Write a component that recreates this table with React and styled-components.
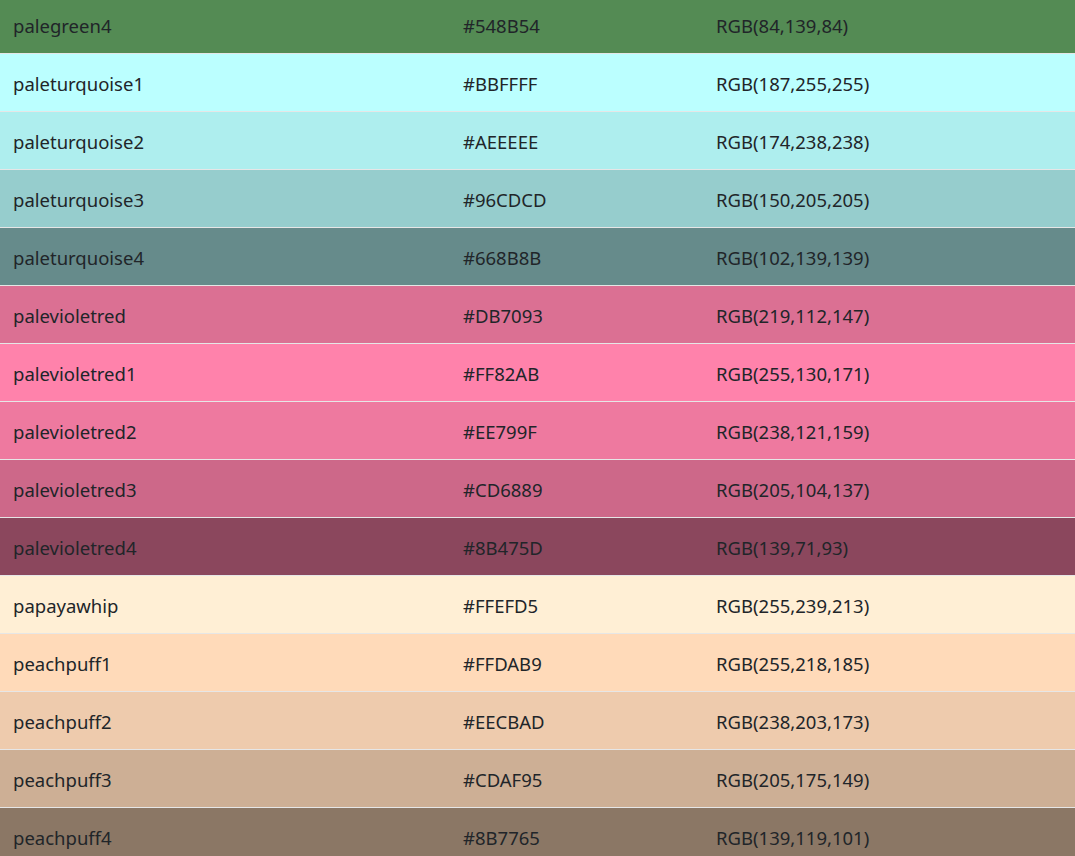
import styled, { createGlobalStyle } from "styled-components";

const GlobalStyle = createGlobalStyle`
  body {
    margin: 0;
    font-family: "Noto Sans", "Open Sans", sans-serif;
    color: #212529;
    background: #fff;
    overflow: hidden;
  }
`;

const Table = styled.table`
  width: 100%;
  border-collapse: separate;
  border-spacing: 0;
  margin-top: -5px;
  font-size: 18.5px;
  line-height: 27px;
`;

const Row = styled.tr`
  background-color: ${(p) => p.$color};
`;

const Cell = styled.td`
  padding: 16px 12px 14px 13px;
  border-top: 1px solid #e6e6e6;
  color: #212529;
  width: ${(p) => p.$width || "auto"};
  box-sizing: border-box;
`;

const colors = [
  ["palegreen4", "548B54"],
  ["paleturquoise1", "BBFFFF"],
  ["paleturquoise2", "AEEEEE"],
  ["paleturquoise3", "96CDCD"],
  ["paleturquoise4", "668B8B"],
  ["palevioletred", "DB7093"],
  ["palevioletred1", "FF82AB"],
  ["palevioletred2", "EE799F"],
  ["palevioletred3", "CD6889"],
  ["palevioletred4", "8B475D"],
  ["papayawhip", "FFEFD5"],
  ["peachpuff1", "FFDAB9"],
  ["peachpuff2", "EECBAD"],
  ["peachpuff3", "CDAF95"],
  ["peachpuff4", "8B7765"],
];

const toRgb = (hex) => {
  const n = parseInt(hex, 16);
  return `RGB(${(n >> 16) & 255},${(n >> 8) & 255},${n & 255})`;
};

export default function App() {
  return (
    <>
      <GlobalStyle />
      <Table>
        <tbody>
          {colors.map(([name, hex]) => (
            <Row key={name} $color={`#${hex}`}>
              <Cell $width="450px">{name}</Cell>
              <Cell $width="253px">#{hex}</Cell>
              <Cell>{toRgb(hex)}</Cell>
            </Row>
          ))}
        </tbody>
      </Table>
    </>
  );
}
